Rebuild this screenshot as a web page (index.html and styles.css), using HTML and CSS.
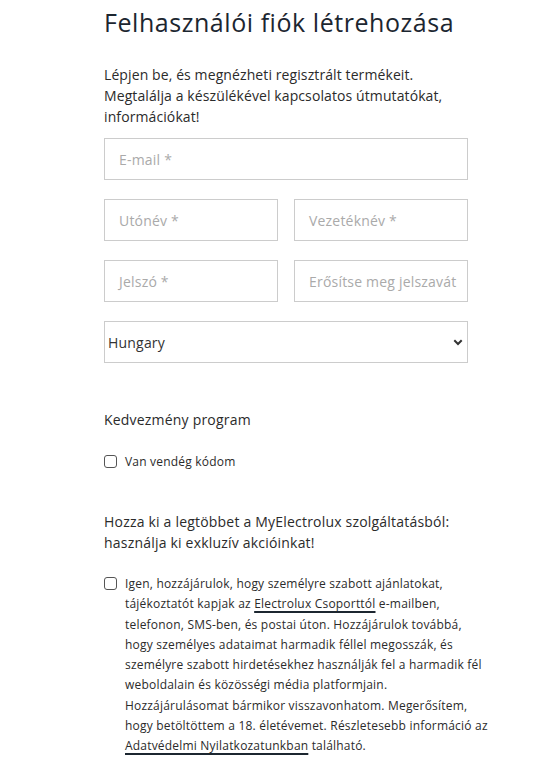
FILE: index.html
```html
<!DOCTYPE html>
<html lang="hu">
<head>
<meta charset="utf-8">
<link rel="stylesheet" href="styles.css">
</head>
<body>
<main class="page">
  <h1 class="title">Felhasználói fiók létrehozása</h1>
  <p class="intro">Lépjen be, és megnézheti regisztrált termékeit. Megtalálja a készülékével kapcsolatos útmutatókat, információkat!</p>
  <form class="form">
    <div class="field"><span class="ph">E-mail *</span></div>
    <div class="row">
      <div class="field"><span class="ph">Utónév *</span></div>
      <div class="field"><span class="ph">Vezetéknév *</span></div>
    </div>
    <div class="row">
      <div class="field"><span class="ph">Jelszó *</span></div>
      <div class="field"><span class="ph">Erősítse meg jelszavát</span></div>
    </div>
    <div class="field select">
      <span class="val">Hungary</span>
      <svg class="chev" width="10" height="7" viewBox="0 0 10 7"><path d="M1.3 1.3 L5 5 L8.7 1.3" fill="none" stroke="#333" stroke-width="2"/></svg>
    </div>
  </form>
  <h2 class="sub">Kedvezmény program</h2>
  <label class="check guest"><span class="box"></span><span>Van vendég kódom</span></label>
  <p class="promo">Hozza ki a legtöbbet a MyElectrolux szolgáltatásból: használja ki exkluzív akcióinkat!</p>
  <label class="check consent"><span class="box"></span><span class="ctext">Igen, hozzájárulok, hogy személyre szabott ajánlatokat,<br>tájékoztatót kapjak az <a>Electrolux Csoporttól</a> e-mailben,<br>telefonon, SMS-ben, és postai úton. Hozzájárulok továbbá,<br>hogy személyes adataimat harmadik féllel megosszák, és<br>személyre szabott hirdetésekhez használják fel a harmadik fél<br>weboldalain és közösségi média platformjain.<br>Hozzájárulásomat bármikor visszavonhatom. Megerősítem,<br>hogy betöltöttem a 18. életévemet. Részletesebb információ az<br><a>Adatvédelmi Nyilatkozatunkban</a> található.</span></label>
</main>
</body>
</html>
```
FILE: styles.css
```css
* { box-sizing: border-box; }
html, body { margin: 0; padding: 0; background: #fff; }
body { font-family: "Open Sans", "Noto Sans", sans-serif; color: #2b2b2b; }
.page { width: 420px; margin-left: 104px; padding-top: 5px; }
.title { font-size: 25px; font-weight: 400; margin: 0; line-height: 34px; color: #1c2630; letter-spacing: 0.55px; }
.intro { font-size: 14px; line-height: 21px; margin: 25px 0 0; width: 364px; color: #2b2b2b; letter-spacing: 0.1px; }
.form { width: 364px; margin-top: 11px; display: flex; flex-direction: column; gap: 19px; }
.row { display: flex; gap: 16px; }
.row .field { flex: 1 1 0; min-width: 0; }
.field { height: 42px; border: 1px solid #ccc; display: flex; align-items: center; padding: 0 0 0 14px; font-size: 14px; letter-spacing: 0.2px; overflow: hidden; }
.ph { color: #aaa; white-space: nowrap; }
.select { padding: 0 4px 0 3px; justify-content: space-between; }
.val { color: #333; font-size: 14px; }
.sub { font-size: 14px; font-weight: 400; margin: 47px 0 0; line-height: 20px; letter-spacing: 0.2px; }
.check { display: flex; align-items: flex-start; gap: 8px; font-size: 12px; line-height: 18px; letter-spacing: 0.2px; }
.guest { margin-top: 23px; }
.box { width: 13px; height: 13px; border: 1px solid #555; border-radius: 3px; flex: none; margin-top: 2px; }
.promo { font-size: 14px; line-height: 21px; margin: 40px 0 0; width: 364px; letter-spacing: 0.2px; }
.consent { margin-top: 22px; }
.ctext { line-height: 20.3px; margin-top: -1px; white-space: nowrap; }
.ctext a { color: inherit; text-decoration: underline; text-decoration-color: #1c2630; text-decoration-thickness: 2px; text-underline-offset: 3px; }
```
